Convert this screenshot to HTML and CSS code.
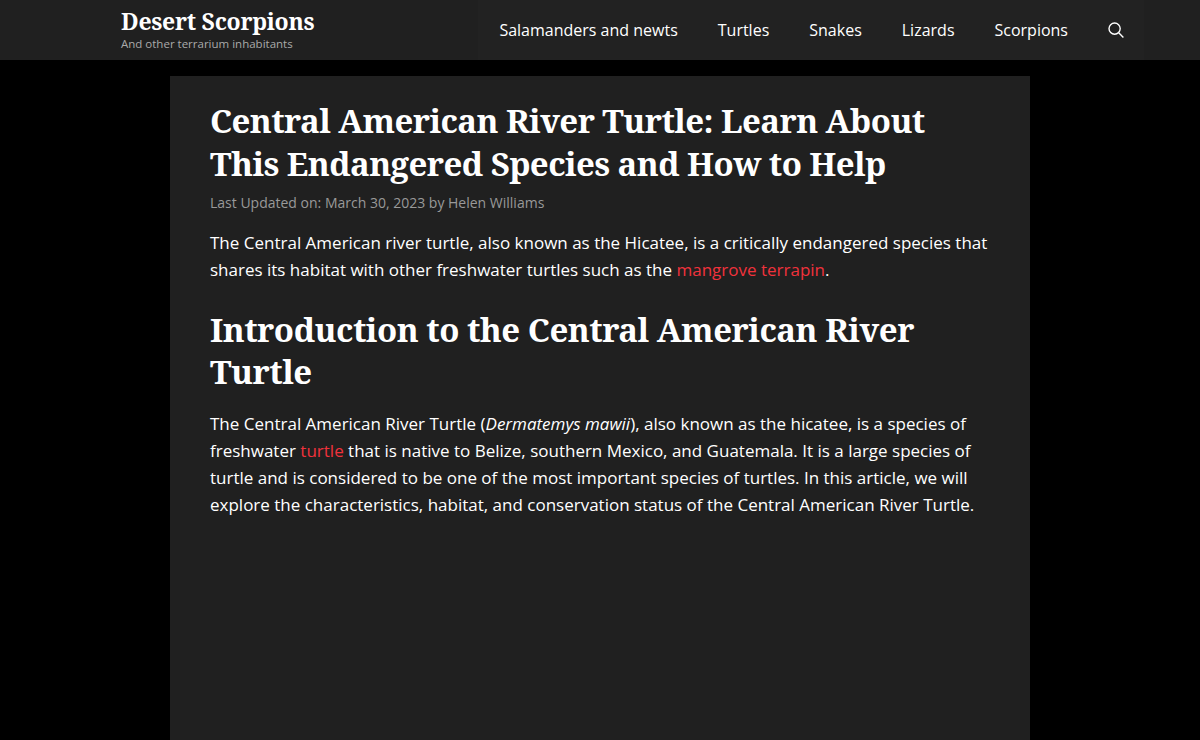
FILE: index.html

```html
<!DOCTYPE html>
<html lang="en">
<head>
  <meta charset="UTF-8" />
  <title>Central American River Turtle - Desert Scorpions</title>
  <link rel="stylesheet" href="styles.css">
</head>
<body>
  <header class="site-header">
    <div class="header-inner">
      <div class="branding">
        <a class="site-title" href="#">Desert Scorpions</a>
        <div class="tagline">And other terrarium inhabitants</div>
      </div>
      <nav class="main-nav">
        <a href="#">Salamanders and newts</a>
        <a href="#">Turtles</a>
        <a href="#">Snakes</a>
        <a href="#">Lizards</a>
        <a href="#">Scorpions</a>
        <a class="search" href="#" aria-label="Search">
          <svg width="16" height="16" viewBox="0 0 16 16" fill="none" stroke="currentColor" stroke-width="1.4">
            <circle cx="6.6" cy="6.6" r="5.6"/>
            <path d="M10.7 10.7 L15.4 15.4"/>
          </svg>
        </a>
      </nav>
    </div>
  </header>

  <main class="content">
    <h1>Central American River Turtle: Learn About This Endangered Species and How to Help</h1>
    <p class="meta">Last Updated on: March 30, 2023 by Helen Williams</p>
    <p>The Central American river turtle, also known as the Hicatee, is a critically endangered species that shares its habitat with other freshwater turtles such as the <a href="#">mangrove terrapin</a>.</p>
    <h2>Introduction to the Central American River Turtle</h2>
    <p>The Central American River Turtle (<em>Dermatemys mawii</em>), also known as the hicatee, is a species of freshwater <a href="#">turtle</a> that is native to Belize, southern Mexico, and Guatemala. It is a large species of turtle and is considered to be one of the most important species of turtles. In this article, we will explore the characteristics, habitat, and conservation status of the Central American River Turtle.</p>
  </main>
</body>
</html>
```

FILE: styles.css

```css
body {
  margin: 0;
  height: 740px;
  overflow: hidden;
  background: #000;
  color: #fff;
  font-family: 'Open Sans', sans-serif;
  font-size: 17px;
  line-height: 27px;
}
a {
  text-decoration: none;
}
.site-header {
  background: #202020;
  height: 60px;
}
.header-inner {
  height: 60px;
  padding: 0 56px 0 121px;
  display: flex;
  justify-content: space-between;
}
.site-title {
  display: block;
  margin-top: 6px;
  color: #fff;
  font-family: 'Noto Serif', 'DejaVu Serif', serif;
  font-size: 23px;
  font-weight: 700;
  line-height: 30px;
  letter-spacing: -0.25px;
}
.tagline {
  margin-top: 1px;
  color: #aaa;
  font-size: 11.5px;
  line-height: 14px;
}
.main-nav {
  display: flex;
  align-items: center;
  background: #222;
  padding-left: 1px;
}
.main-nav a {
  color: #fff;
  font-size: 16px;
  padding: 0 20px;
}
.main-nav .search {
  display: flex;
}
.content {
  width: 780px;
  height: 665px;
  margin: 16px auto 0;
  padding: 23px 40px 0;
  background: #202020;
}
h1, h2 {
  font-family: 'Noto Serif', 'DejaVu Serif', serif;
  font-weight: 700;
  margin: 0;
  font-size: 33px;
  letter-spacing: -0.58px;
}
h1 {
  line-height: 43px;
}
h2 {
  line-height: 42px;
  margin-top: 26px;
  margin-bottom: 17px;
  letter-spacing: -0.5px;
}
p {
  margin: 0 0 20px;
}
.meta {
  color: #999;
  font-size: 14px;
  margin: 4px 0 13px;
}
.content a {
  color: #f0323c;
}
```
